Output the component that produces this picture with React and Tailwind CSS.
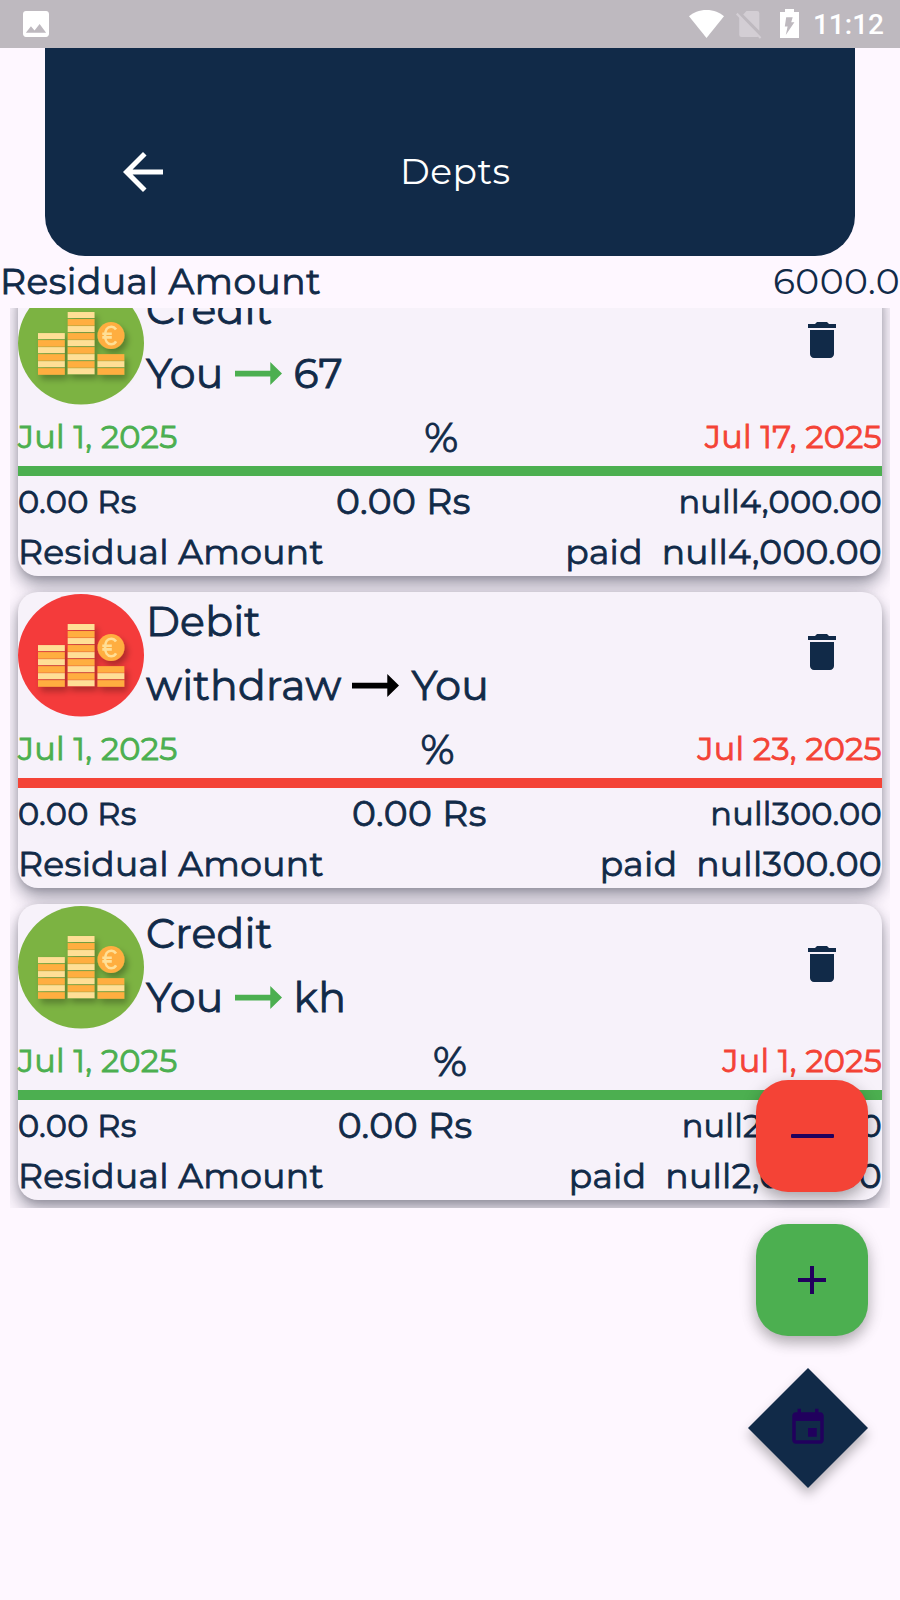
const NAVY = "#112a48";

const DEBTS = [
  {
    id: 1,
    kind: "Credit",
    from: "You",
    to: "67",
    start: "Jul 1, 2025",
    end: "Jul 17, 2025",
    total: "null4,000.00",
    credit: true,
  },
  {
    id: 2,
    kind: "Debit",
    from: "withdraw",
    to: "You",
    start: "Jul 1, 2025",
    end: "Jul 23, 2025",
    total: "null300.00",
    credit: false,
  },
  {
    id: 3,
    kind: "Credit",
    from: "You",
    to: "kh",
    start: "Jul 1, 2025",
    end: "Jul 1, 2025",
    total: "null2,000.00",
    credit: true,
  },
];

function StatusBar() {
  return (
    <div className="flex h-12 shrink-0 items-start bg-[#beb9bf] text-white">
      <svg className="mt-[11px] ml-[23px] h-[26px] w-[26px]" viewBox="3 3 18 18" fill="currentColor">
        <path d="M21 19V5c0-1.100-.9-2-2-2H5c-1.100 0-2 .9-2 2v14c0 1.100.9 2 2 2h14c1.100 0 2-.9 2-2zM8.500 13.500l2.500 3.010L14.500 12l4.500 6H5l3.500-4.500z" />
      </svg>
      <svg className="mt-[10px] ml-auto h-7 w-[35px]" viewBox="0 0 35 28" fill="currentColor">
        <path d="M17.500 28 0 6.200C4 2.600 10.200 0 17.500 0S31 2.600 35 6.200z" />
      </svg>
      <svg className="mt-[11px] ml-3 h-7 w-[26px] text-[#d3ced4]" viewBox="0 0 26 28" fill="currentColor">
        <path d="M10.500 0H21a2.300 2.300 0 0 1 2.300 2.300V19.800L7.200 3.600z" />
        <path d="M3.200 5.700 22.500 25.200c-.4.5-.9.800-1.500.800H5.400a2.300 2.300 0 0 1-2.200-2.300z" />
        <path d="M1.500 1.800 25.300 26.200 23.900 27.700 0 3.400z" />
      </svg>
      <svg className="mt-[9px] ml-[18px] h-[29px] w-[19px]" viewBox="0 0 19 29">
        <path d="M5 0h9v3h5v26H0V3h5z" fill="#fff" />
        <path d="M6.200 8.200h6.500l-1.500 5h3.200L5.800 26l1.800-8.600H4.800z" fill="#beb9bf" />
      </svg>
      <span className="mt-[9px] mr-4 ml-[14px] font-['Roboto',sans-serif] text-[28px] leading-8 font-medium">
        11:12
      </span>
    </div>
  );
}

function Coins({ credit }) {
  const light = "#ffdf96";
  const orange = "#ffae40";
  const columns = [
    { x: 20, rows: 6 },
    { x: 49.7, rows: 9 },
    { x: 79.5, rows: 3 },
  ];
  const bottom = 92.7;
  const step = 7.02;
  return (
    <svg className="mt-0.5 h-[123px] w-[126px] shrink-0" viewBox="0 0 126 123">
      <defs>
        <filter id="coin-shadow" x="-20%" y="-20%" width="150%" height="150%">
          <feDropShadow dx="3" dy="4.500" stdDeviation="3" floodColor="#000" floodOpacity="0.3" />
        </filter>
      </defs>
      <ellipse cx="63" cy="61.300" rx="63" ry="61.300" fill={credit ? "#7cb342" : "#f43b3b"} />
      <g filter="url(#coin-shadow)">
        {columns.map((c, ci) =>
          Array.from({ length: c.rows }, (_, i) => {
            const isLight = ci === 1 ? i % 2 === 0 : i % 2 === 1;
            return (
              <rect
                key={`${ci}-${i}`}
                x={c.x}
                y={bottom - (i + 1) * step + 0.5}
                width="26.800"
                height={isLight ? 6 : 6.6}
                fill={isLight ? light : orange}
              />
            );
          })
        )}
        <circle cx="93" cy="53.500" r="13.500" fill={orange} />
      </g>
      <path
        d="M98 47.500c-1.200-1.900-3-2.800-4.900-2.800-3.700 0-6 3.400-6 8.700s2.300 8.800 6 8.800c2 0 3.900-1 5-2.900M84.300 51.700h9.500M84.300 55.400h9.500"
        fill="none"
        stroke={light}
        strokeWidth="2.600"
      />
    </svg>
  );
}

function Arrow({ color }) {
  return (
    <svg className="mr-3 ml-[11px] h-[23px] w-[47px]" viewBox="4 8 16 8" preserveAspectRatio="none" fill={color}>
      <path d="M16.010 11H4v2h12.010v3L20 12l-3.990-4v3z" />
    </svg>
  );
}

function DebtCard({ debt }) {
  const accent = debt.credit ? "#4caf50" : "#f44336";
  return (
    <div className="flex h-[296px] shrink-0 flex-col rounded-[20px] bg-[#f7f2fa] text-[32px] tracking-[0.25px] shadow-[0_9px_18px_rgba(20,24,45,0.42),0_2px_6px_rgba(0,0,0,0.12)] [-webkit-text-stroke:0.85px]">
      <div className="flex h-[126px]">
        <Coins credit={debt.credit} />
        <div className="flex flex-1 flex-col pl-0.5 text-[41px] tracking-[0.25px]">
          <div className="flex h-[60px] items-center">{debt.kind}</div>
          <div className="flex h-[66px] items-center">
            <span className="pt-0.5">{debt.from}</span>
            <Arrow color={debt.credit ? "#4caf50" : "#000"} />
            <span className="pt-0.5">{debt.to}</span>
          </div>
        </div>
        <svg className="mt-9 mr-9 h-12 w-12" viewBox="0 0 24 24" fill={NAVY}>
          <path d="M6 19c0 1.100.9 2 2 2h8c1.100 0 2-.9 2-2V7H6v12zM19 4h-3.500l-1-1h-5l-1 1H5v2h14V4z" />
        </svg>
      </div>
      <div className="flex h-[60px] items-center justify-between pt-px">
        <span className="text-[#4caf50]">{debt.start}</span>
        <span className="pt-0.5 text-[41px]">%</span>
        <span className="text-[#f44336]">{debt.end}</span>
      </div>
      <div className="h-2.5 w-full" style={{ backgroundColor: accent }} />
      <div className="flex h-[51px] items-center justify-between">
        <span>0.00 Rs</span>
        <span className="mr-2 pb-0.5 text-[36px] tracking-[0.5px]">0.00 Rs</span>
        <span>{debt.total}</span>
      </div>
      <div className="flex h-[49px] items-center justify-between pt-[3px] text-[34.5px] tracking-[0.34px]">
        <span>Residual Amount</span>
        <span className="whitespace-pre">{`paid  ${debt.total}`}</span>
      </div>
    </div>
  );
}

function Fabs() {
  return (
    <div className="absolute top-[1080px] right-8 flex flex-col items-end gap-8">
      <button className="flex h-28 w-28 items-center justify-center rounded-[32px] bg-[#f44336] shadow-[0_7px_14px_rgba(0,0,0,0.26),0_2px_20px_rgba(0,0,0,0.09)]">
        <svg className="h-1 w-[43px]" viewBox="0 0 43 4">
          <rect width="43" height="4" rx="1" fill="#21005d" />
        </svg>
      </button>
      <button className="flex h-28 w-28 items-center justify-center rounded-[32px] bg-[#4caf50] shadow-[0_7px_14px_rgba(0,0,0,0.26),0_2px_20px_rgba(0,0,0,0.09)]">
        <svg className="h-12 w-12" viewBox="0 0 24 24" fill="#21005d">
          <path d="M19 13h-6v6h-2v-6H5v-2h6V5h2v6h6v2z" />
        </svg>
      </button>
      <button className="flex h-[120px] w-[120px] items-center justify-center">
        <svg className="h-[120px] w-[120px] overflow-visible drop-shadow-[0_7px_6px_rgba(0,0,0,0.28)]" viewBox="0 0 120 120">
          <path d="M60 0 120 60 60 120 0 60z" fill={NAVY} />
          <path
            transform="translate(39 39) scale(1.75)"
            d="M17 12h-5v5h5v-5zM16 1v2H8V1H6v2H5c-1.110 0-1.990.9-1.990 2L3 19c0 1.100.89 2 2 2h14c1.100 0 2-.9 2-2V5c0-1.100-.9-2-2-2h-1V1h-2zm3 18H5V8h14v11z"
            fill="#21005d"
          />
        </svg>
      </button>
    </div>
  );
}

export default function App() {
  return (
    <div className="relative flex h-[1600px] w-[900px] flex-col overflow-hidden bg-[#fef7ff] font-['Montserrat','Inter',sans-serif] text-[#112a48]">
      <StatusBar />
      <header className="mx-[45px] flex h-[208px] shrink-0 items-center rounded-b-[40px] bg-[#112a48] pt-[38px] text-white">
        <svg className="mt-px ml-[68px] h-[60px] w-[60px]" viewBox="0 0 24 24" fill="currentColor">
          <path d="M20 11H7.830l5.590-5.590L12 4l-8 8 8 8 1.410-1.410L7.830 13H20v-2z" />
        </svg>
        <h1 className="ml-[227px] text-[36px] font-normal tracking-[0.5px]">Depts</h1>
      </header>
      <div className="flex h-[52px] shrink-0 items-center justify-between pb-0.5 text-[36px] tracking-[0.5px]">
        <span className="[-webkit-text-stroke:0.85px]">Residual Amount</span>
        <span>6000.0</span>
      </div>
      <div className="mx-2.5 flex h-[900px] shrink-0 flex-col justify-end gap-4 overflow-hidden px-2 pb-2">
        {DEBTS.map((d) => (
          <DebtCard key={d.id} debt={d} />
        ))}
      </div>
      <Fabs />
    </div>
  );
}
